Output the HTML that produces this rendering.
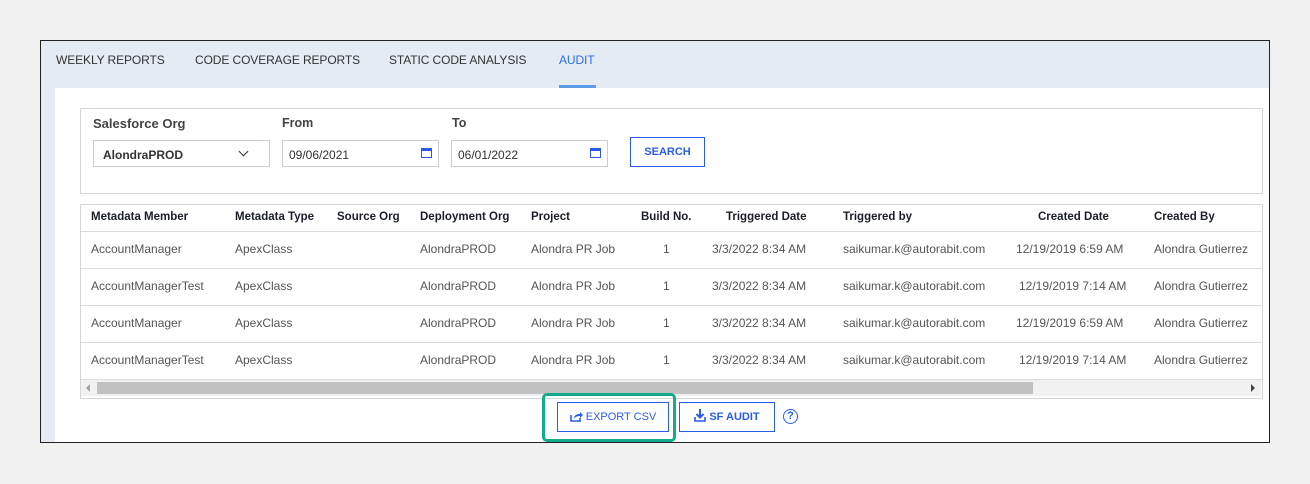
<!DOCTYPE html><html><head><style>
body{margin:0;width:1310px;height:484px;background:#f1f1f1;font-family:"Liberation Sans",sans-serif;position:relative;overflow:hidden}
.a{position:absolute}
.frame{left:40px;top:40px;width:1228px;height:401px;border:1px solid #222;background:#e4ebf3}
.tab{top:53px;font-size:12px;color:#333;letter-spacing:-.1px}
.panel{left:55px;top:88px;width:1214px;height:354px;background:#fff}
.box{border:1px solid #d3d6db;background:#fff}
.lbl{font-size:12.5px;font-weight:bold;color:#444}
.inp{border:1px solid #c9ccd1;height:27px;background:#fff;font-size:12px;color:#333;box-sizing:border-box;padding:7px 6px}
.cal{position:absolute;right:6px;top:7px;width:11px;height:10px;border:1.5px solid #2b59e6;border-top-width:3px;box-sizing:border-box}
.th{font-size:11.5px;font-weight:bold;color:#1b1f2a;top:211px}
.td{font-size:12px;color:#555}
.hl{left:81px;width:1181px;height:1px;background:#dcdde0}
.btn{border:1px solid #2a5ce6;color:#2a5ce6;font-size:11px;box-sizing:border-box;text-align:center;background:#fff}
.btn svg{vertical-align:-2px;margin-right:3px}
</style></head><body>
<div class="a frame"></div>
<div class="a tab" style="left:56px">WEEKLY REPORTS</div>
<div class="a tab" style="left:195px">CODE COVERAGE REPORTS</div>
<div class="a tab" style="left:389px">STATIC CODE ANALYSIS</div>
<div class="a tab" style="left:559px;color:#2a6fe6">AUDIT</div>
<div class="a" style="left:559px;top:85px;width:37px;height:3px;background:#5b9be8"></div>
<div class="a panel"></div>
<div class="a box" style="left:80px;top:108px;width:1181px;height:84px"></div>
<div class="a lbl" style="left:93px;top:116px;font-size:13px">Salesforce Org</div>
<div class="a lbl" style="left:282px;top:116px">From</div>
<div class="a lbl" style="left:452px;top:116px">To</div>
<div class="a inp" style="left:93px;top:140px;width:177px;font-weight:bold;padding-left:9px">AlondraPROD<span style="position:absolute;right:22px;top:7px;width:6px;height:6px;border-right:1.5px solid #333;border-bottom:1.5px solid #333;transform:rotate(45deg)"></span></div>
<div class="a inp" style="left:282px;top:140px;width:157px">09/06/2021<span class="cal"></span></div>
<div class="a inp" style="left:451px;top:140px;width:157px">06/01/2022<span class="cal"></span></div>
<div class="a btn" style="left:630px;top:137px;width:75px;height:30px;line-height:29px;font-weight:bold">SEARCH</div>
<div class="a box" style="left:80px;top:204px;width:1181px;height:193px"></div>
<div class="a th" style="left:91px">Metadata Member</div>
<div class="a th" style="left:235px">Metadata Type</div>
<div class="a th" style="left:337px">Source Org</div>
<div class="a th" style="left:420px">Deployment Org</div>
<div class="a th" style="left:531px">Project</div>
<div class="a th" style="left:641px">Build No.</div>
<div class="a th" style="left:726px">Triggered Date</div>
<div class="a th" style="left:843px">Triggered by</div>
<div class="a th" style="left:1038px">Created Date</div>
<div class="a th" style="left:1154px">Created By</div>
<div class="a hl" style="top:231px"></div>
<div class="a hl" style="top:268px"></div>
<div class="a hl" style="top:305px"></div>
<div class="a hl" style="top:342px"></div>
<div class="a hl" style="top:379px"></div>
<div id="rows"></div>
<script>
var r=[["AccountManager","12/19/2019 6:59 AM",1016],["AccountManagerTest","12/19/2019 7:14 AM",1019],["AccountManager","12/19/2019 6:59 AM",1016],["AccountManagerTest","12/19/2019 7:14 AM",1019]];
var h="";r.forEach(function(x,i){var t=242+37*i;function c(l,s){h+='<div class="a td" style="left:'+l+'px;top:'+t+'px">'+s+'</div>'}
c(91,x[0]);c(235,"ApexClass");c(420,"AlondraPROD");c(531,"Alondra PR Job");c(663,"1");c(712,"3/3/2022 8:34 AM");c(843,"saikumar.k@autorabit.com");c(x[2],x[1]);c(1154,"Alondra Gutierrez")});
document.getElementById("rows").innerHTML=h;
</script>
<div class="a" style="left:81px;top:380px;width:1180px;height:16px;background:#f1f1f1"></div>
<div class="a" style="left:97px;top:382px;width:936px;height:12px;background:#c1c1c1"></div>
<div class="a" style="left:86px;top:384px;width:0;height:0;border:4px solid transparent;border-right-color:#a3a3a3;border-left:0"></div>
<div class="a" style="left:1251px;top:384px;width:0;height:0;border:4px solid transparent;border-left-color:#444;border-right:0"></div>
<div class="a" style="left:542px;top:393px;width:128px;height:43px;border:3px solid #12ab8c;border-radius:5px"></div>
<div class="a btn" style="left:557px;top:402px;width:112px;height:30px;line-height:28px"><svg width="13" height="12" viewBox="0 0 13 12"><path d="M1 5v6h9V8" fill="none" stroke="#2a5ce6" stroke-width="1.6"/><path d="M4 9c0-4 3-5 6-5V2l3 3-3 3V6c-3 0-5 1-6 3z" fill="#2a5ce6"/></svg>EXPORT CSV</div>
<div class="a btn" style="left:679px;top:402px;width:96px;height:30px;line-height:28px;font-weight:bold"><svg width="12" height="13" viewBox="0 0 12 13"><path d="M6 0v8M2.5 5l3.5 3.5L9.5 5" fill="none" stroke="#2a5ce6" stroke-width="2"/><path d="M1 8v4h10V8" fill="none" stroke="#2a5ce6" stroke-width="1.6"/></svg>SF AUDIT</div>
<div class="a" style="left:783px;top:409px;width:13px;height:13px;border:1.5px solid #2a5ce6;border-radius:50%;color:#2a5ce6;font-size:11px;font-weight:bold;text-align:center;line-height:13px">?</div>
</body></html>
